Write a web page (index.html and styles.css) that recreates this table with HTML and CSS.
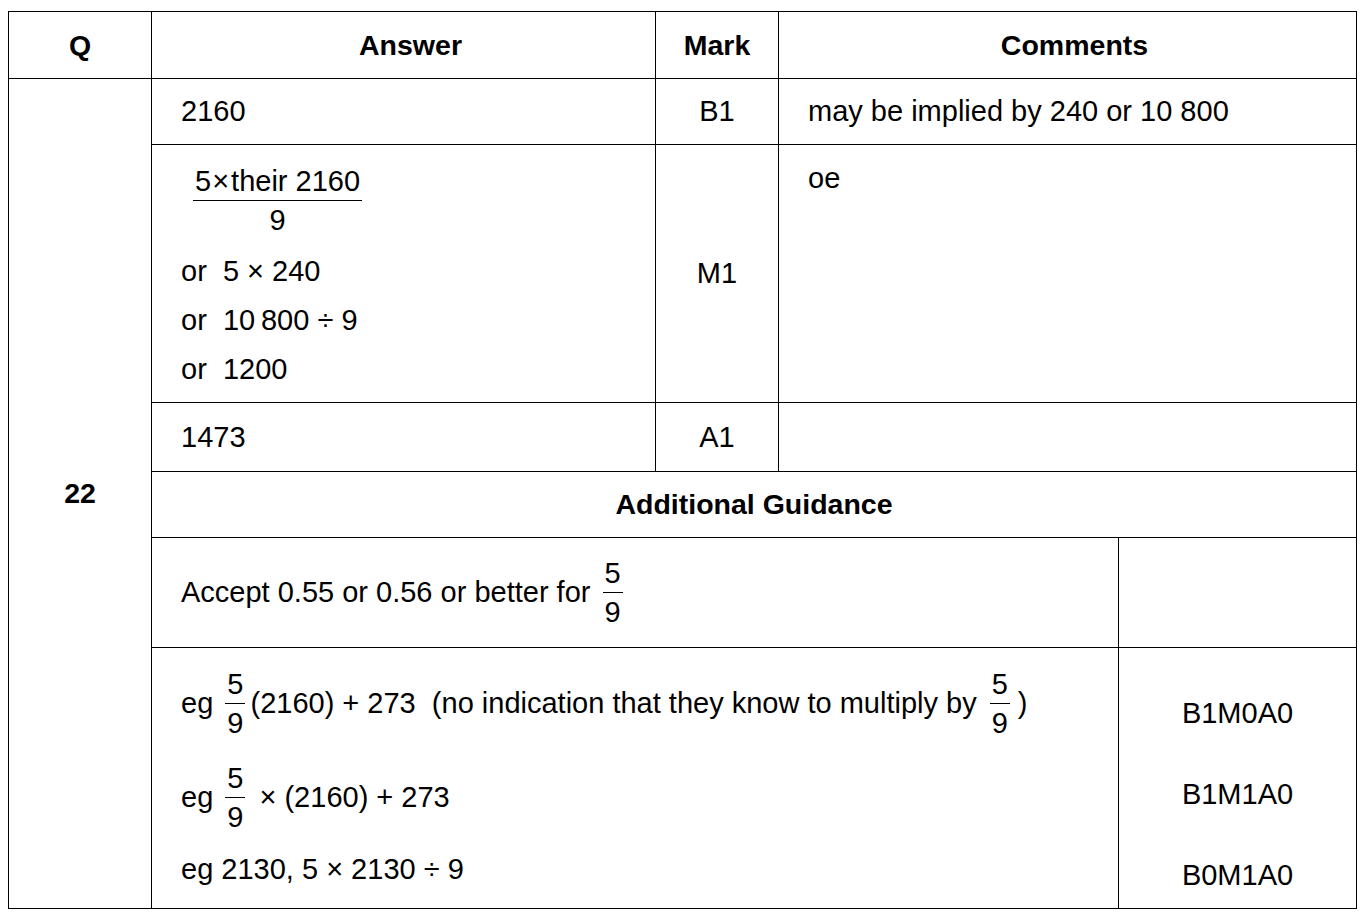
FILE: index.html
```html
<!DOCTYPE html>
<html>
<head>
<meta charset="utf-8">
<link rel="stylesheet" href="styles.css">
</head>
<body>
<table class="ms">
  <colgroup>
    <col class="c-q"><col class="c-ans"><col class="c-mark"><col class="c-com1"><col class="c-com2">
  </colgroup>
  <tr class="r-head">
    <th>Q</th>
    <th class="shift">Answer</th>
    <th>Mark</th>
    <th colspan="2" class="shift">Comments</th>
  </tr>
  <tr class="r-1">
    <td rowspan="6" class="qnum">22</td>
    <td class="ans">2160</td>
    <td class="mark">B1</td>
    <td colspan="2" class="com">may be implied by 240 or 10 800</td>
  </tr>
  <tr class="r-2">
    <td class="ans top">
      <div class="bigfrac">
        <span class="frac"><span class="num">5<span class="times">×</span>their 2160</span><span class="den">9</span></span>
      </div>
      <div class="orline">or&nbsp; 5 × 240</div>
      <div class="orline">or&nbsp; 10&#8239;800 ÷ 9</div>
      <div class="orline">or&nbsp; 1200</div>
    </td>
    <td class="mark">M1</td>
    <td colspan="2" class="com top"><div class="oe">oe</div></td>
  </tr>
  <tr class="r-3">
    <td class="ans">1473</td>
    <td class="mark">A1</td>
    <td colspan="2" class="com"></td>
  </tr>
  <tr class="r-guid">
    <th colspan="4">Additional Guidance</th>
  </tr>
  <tr class="r-acc">
    <td colspan="3" class="ans">
      <div class="fline">Accept 0.55 or 0.56 or better for <span class="frac gapl"><span class="num">5</span><span class="den">9</span></span></div>
    </td>
    <td class="side"></td>
  </tr>
  <tr class="r-eg">
    <td colspan="3" class="ans top eg">
      <div class="fline l1">eg <span class="frac gapl"><span class="num">5</span><span class="den">9</span></span><span class="after">(2160) + 273&nbsp; (no indication that they know to multiply by</span><span class="frac gapby"><span class="num">5</span><span class="den">9</span></span><span class="close">)</span></div>
      <div class="fline l2">eg <span class="frac gapl"><span class="num">5</span><span class="den">9</span></span><span class="after2">× (2160) + 273</span></div>
      <div class="fline l3">eg 2130, 5 × 2130 ÷ 9</div>
    </td>
    <td class="side top outcomes">
      <div>B1M0A0</div>
      <div>B1M1A0</div>
      <div>B0M1A0</div>
    </td>
  </tr>
</table>
</body>
</html>
```

FILE: styles.css
```css
html, body {
  margin: 0;
  padding: 0;
  background: #fff;
}
body {
  font-family: "Liberation Sans", Arial, sans-serif;
  font-size: 29px;
  color: #000;
}
.ms {
  margin: 11px 0 0 8px;
  border-collapse: collapse;
  table-layout: fixed;
  width: 1348px;
}
.c-q { width: 143px; }
.c-ans { width: 504px; }
.c-mark { width: 123px; }
.c-com1 { width: 340px; }
.c-com2 { width: 238px; }

.ms th, .ms td {
  border: 1px solid #000;
  padding: 0;
  vertical-align: middle;
}
.ms th {
  font-weight: bold;
  font-size: 28.5px;
  text-align: center;
}
.ms th.shift { padding-left: 14px; }
.r-head { height: 67px; }
.r-1 { height: 66px; }
.r-2 { height: 258px; }
.r-3 { height: 69px; }
.r-guid { height: 66px; }
.r-acc { height: 110px; }
.r-eg { height: 261px; }

.qnum {
  font-weight: bold;
  font-size: 28.5px;
  text-align: center;
}
.ans { padding-left: 29px !important; }
.com { padding-left: 29px !important; }
.mark { text-align: center; }
.top { vertical-align: top !important; }

.bigfrac {
  padding-top: 17px;
  padding-left: 12px;
}
.frac {
  display: inline-flex;
  flex-direction: column;
  align-items: center;
  vertical-align: middle;
}
.frac .num {
  line-height: 38px;
  padding: 0 2px;
  white-space: nowrap;
}
.times {
  margin: 0 2px 0 1px;
}
.frac .den {
  line-height: 38px;
  border-top: 1px solid #000;
  align-self: stretch;
  text-align: center;
}
.orline {
  line-height: 49px;
}
.bigfrac + .orline { margin-top: 8px; }

.oe {
  padding-top: 16px;
  line-height: 34px;
}

.fline {
  display: flex;
  align-items: center;
  white-space: pre;
}
.gapl { margin-left: 4px; }
.gapby { margin-left: 13px; }
.after { margin-left: 5px; }
.close { margin-left: 8px; }
.after2 { margin-left: 14px; }

.eg { padding-top: 17px !important; }
.l2 { margin-top: 17px; }
.l3 { margin-top: 13px; line-height: 40px; }

.side { text-align: center; }
.outcomes { padding-top: 45px !important; }
.outcomes div { line-height: 40px; }
.outcomes div + div { margin-top: 41px; }
```
